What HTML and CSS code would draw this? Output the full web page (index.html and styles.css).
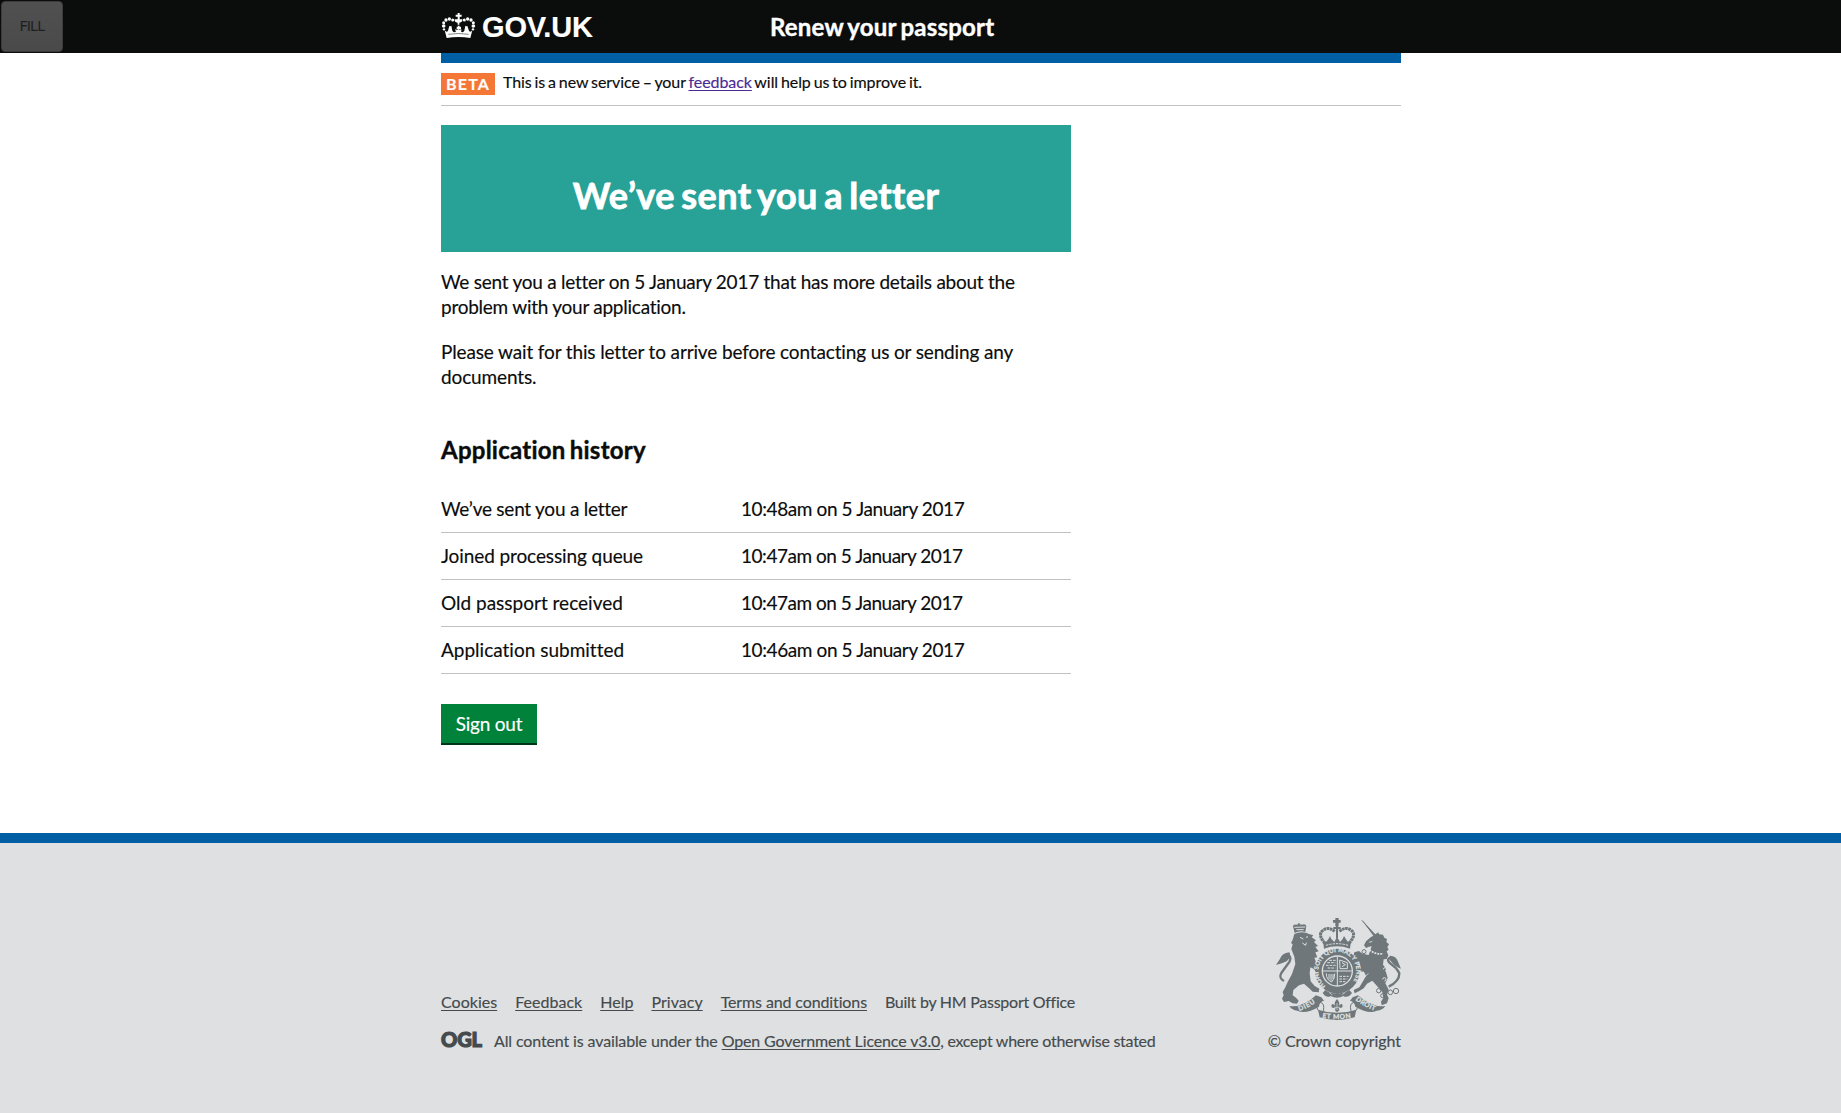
FILE: index.html
```html
<!DOCTYPE html>
<html lang="en">
<head>
<meta charset="utf-8">
<title>Renew your passport - GOV.UK</title>
<link rel="stylesheet" href="styles.css">
</head>
<body>
<button class="fill-button" type="button">FILL</button>
<header class="header">
  <div class="container header-inner">
    <a class="logo" href="#">
      <svg class="logo-crown" viewBox="33 36 105 81" aria-hidden="true">
        <g fill="#fff">
          <path d="M44 91 L50 114 Q85 108 121 114 L127 91 Q121 99 117 92 L112 78 L109 79 L106 77 L103 92 Q97 101 93 94 L95 89 Q91 86 90 91 L86 87 L80 91 Q79 86 75 89 L78 94 Q73 101 67 92 L64 77 L61 79 L58 78 L54 92 Q50 99 44 91 Z"/>
          <path d="M83 39h6v5h6v6h-6v8h8v5q-4 5-9 5v6h-5v-6q-6 0-9-5v-5h9v-8h-6v-6h6z"/>
          <path d="M80 80l3 1v-4h6v4l4-1v8h-13z"/>
          <circle cx="41" cy="78" r="5.5"/><circle cx="41" cy="68" r="4.5"/><circle cx="48" cy="60" r="5"/><circle cx="58" cy="57" r="5"/><circle cx="68" cy="60" r="4.5"/>
          <circle cx="130" cy="78" r="5.5"/><circle cx="130" cy="68" r="4.5"/><circle cx="123" cy="60" r="5"/><circle cx="113" cy="57" r="5"/><circle cx="103" cy="60" r="4.5"/>
          <circle cx="42" cy="88" r="3.5"/><circle cx="129" cy="88" r="3.5"/>
        </g>
        <path d="M55 103q30-5 61 0" fill="none" stroke="#0b0c0c" stroke-width="1.5"/>
      </svg>
      <span class="logo-text">GOV.UK</span>
    </a>
    <a class="service-name" href="#">Renew your passport</a>
  </div>
</header>
<main class="container main">
  <div class="phase-banner">
    <strong class="phase-tag">BETA</strong>
    <span class="phase-text">This is a new service – your <a href="#">feedback</a> will help us to improve it.</span>
  </div>
  <div class="column">
    <div class="confirmation"><h1>We’ve sent you a letter</h1></div>
    <p class="lead">We sent you a letter on 5 January 2017 that has more details about the problem with your application.</p>
    <p>Please wait for this letter to arrive before contacting us or sending any documents.</p>
    <h2>Application history</h2>
    <dl class="history">
      <div class="row"><dt class="tight">We’ve sent you a letter</dt><dd>10:48am on 5 January 2017</dd></div>
      <div class="row"><dt class="snug">Joined processing queue</dt><dd class="narrow">10:47am on 5 January 2017</dd></div>
      <div class="row"><dt>Old passport received</dt><dd class="narrow">10:47am on 5 January 2017</dd></div>
      <div class="row"><dt>Application submitted</dt><dd>10:46am on 5 January 2017</dd></div>
    </dl>
    <a class="button" href="#">Sign out</a>
  </div>
</main>
<footer class="footer">
  <div class="container footer-inner">
    <div class="footer-meta">
      <ul class="footer-links">
        <li><a href="#">Cookies</a></li>
        <li><a href="#">Feedback</a></li>
        <li><a href="#">Help</a></li>
        <li><a href="#">Privacy</a></li>
        <li><a class="terms" href="#">Terms and conditions</a></li>
        <li class="built">Built by HM Passport Office</li>
      </ul>
      <div class="licence">
        <svg class="ogl" viewBox="0 0 41 17" role="img" aria-label="OGL">
          <text x="0" y="16" textLength="41" lengthAdjust="spacingAndGlyphs">OGL</text>
        </svg>
        <p>All content is available under the <a href="#">Open Government Licence v3.0</a><span class="rest">, except where otherwise stated</span></p>
      </div>
    </div>
    <a class="copyright" href="#">
      <svg class="crest" viewBox="48 24 375 306" aria-hidden="true">
        <defs>
          <path id="garter" d="M197 228A57 57 0 1 1 267 228"/>
          <path id="scroll-left" d="M118 303Q146 294 172 273"/>
          <path id="scroll-mid" d="M187 323Q231 331 277 323"/>
          <path id="scroll-right" d="M286 270Q314 292 350 304"/>
        </defs>
        <g class="ink">
          <!-- lion crown -->
          <path d="M104 69L99 49Q100 42 108 44L115 43V39H119V43L126 44Q136 40 139 48L136 66Q119 61 104 69Z"/>
          <!-- lion -->
          <path d="M103 72Q119 64 138 68L147 72L160 76L155 82L168 91L162 96L174 108L166 111L176 124L166 127L172 142L163 143L169 158L181 172L185 197L176 202L162 177L151 172L149 190L152 214L164 228L178 236L176 247L158 245L149 236L132 221L117 226L100 240L98 256L108 263L116 272L111 281L98 280L86 273L72 276L66 266L71 256L68 246L76 232L83 216L96 192L106 162L103 140L94 117L98 103L93 99L98 89Z"/>
          <!-- unicorn -->
          <path d="M306 31L346 73L355 67L357 73L369 74L373 83L381 87L379 96L387 103L382 111L386 119L380 124L385 136L380 147L371 148L369 164L377 174L378 187L383 204L376 220L386 239L381 254L386 264L381 280L365 286L363 275L370 264L367 247L349 226L337 212L321 221L311 235L298 243L284 250L281 240L298 232L309 214L318 198L312 185L299 184L291 174L301 164L290 155L280 139L283 127L297 123L307 131L326 135L335 109L327 110L318 114L312 106L318 94L332 82L340 77Z"/>
        </g>
        <g class="line">
          <!-- tails -->
          <path stroke-width="7" d="M72 213Q55 204 64 189Q76 172 88 156Q95 143 86 135"/>
          <path stroke-width="7" d="M386 230Q418 215 418 190Q410 173 394 163Q376 150 391 143"/>
          <path stroke-width="3" d="M306 31L344 76"/>
        </g>
        <g class="ink">
          <path d="M88 127Q66 130 60 146L48 165Q67 160 80 154Q96 140 88 127Z"/>
          <path d="M390 137Q409 137 414 155L423 176Q404 169 394 155Q384 146 390 137Z"/>
          <!-- crown -->
          <path d="M226 24H236V30H242V38H236V49H226V38H219V30H226Z"/>
        </g>
        <g class="line">
          <path stroke-width="9" stroke-dasharray="8 1.5" d="M195 100Q172 74 188 62Q204 48 224 64M267 100Q290 74 275 62Q258 48 238 64"/>
          <path stroke-width="6" d="M231 48V84M220 54H242"/>
        </g>
        <g class="ink">
          <path d="M189 91L198 96L206 86L210 78L214 87L223 96L231 80L240 96L248 87L252 78L257 86L264 96L273 91L270 116Q231 102 192 116Z"/>
        </g>
        <path class="cut" stroke-width="3" stroke-dasharray="7 3" d="M198 106Q231 96 264 106"/>
        <!-- garter and shield -->
        <circle class="ink" cx="232" cy="183" r="67"/>
        <circle class="paper" cx="232" cy="183" r="47"/>
        <circle class="ink" cx="232" cy="183" r="43"/>
        <path class="cut" stroke-width="3" d="M232 140V226M189 183H275"/>
        <path class="cut" stroke-width="3" stroke-dasharray="8 3" d="M202 158H226M198 166H227M203 174H226M208 151H227M238 199H266M238 207H262M238 215H256"/>
        <path class="cut" stroke-width="3" d="M239 150L262 158V176H240ZM246 158L256 164L246 170M199 190Q199 210 215 216Q225 205 224 191M207 192V208M213 192V212M219 192V207"/>
        <text class="motto"><textPath href="#garter" textLength="262">HONI SOIT QUI MAL Y PENSE</textPath></text>
        <!-- lion and unicorn details -->
        <path class="cut" stroke-width="3" d="M120 82L130 87M138 82L144 80M127 99L137 106L139 98M103 52L136 51M109 59H131"/>
        <path class="cut" stroke-width="5" stroke-dasharray="6 3" d="M328 119Q346 135 369 131"/>
        <path class="cut" stroke-width="2.5" d="M327 97L337 94M310 205L325 190M168 202L183 211M162 180L169 190"/>
        <g class="line">
          <circle cx="356" cy="242" r="6.5" stroke-width="3"/><circle cx="368" cy="257" r="6" stroke-width="3"/><circle cx="391" cy="247" r="7" stroke-width="3"/><circle cx="408" cy="243" r="8" stroke-width="3"/><circle cx="312" cy="125" r="6" stroke-width="3"/><circle cx="302" cy="137" r="5" stroke-width="3"/>
        </g>
        <path class="cut" stroke-width="3" d="M370 178A5 5 0 1 1 375 183M368 208A5 5 0 1 1 373 213"/>
        <!-- scroll -->
        <g class="ink">
          <path d="M196 240Q213 254 231 248Q249 254 268 240L276 249Q263 266 250 258Q231 268 212 258Q200 266 188 249Z"/>
          <path d="M88 288Q128 294 168 256L184 262L192 272Q178 275 177 290Q137 314 112 302Q96 301 88 288Z"/>
          <path d="M376 288Q336 294 294 256L278 262L270 272Q284 275 286 290Q327 314 350 302Q368 301 376 288Z"/>
          <path d="M174 299Q231 318 289 299L284 322Q231 338 179 322Z"/>
        </g>
        <path class="line" stroke-width="3" d="M174 301Q163 280 181 277Q195 280 190 303M289 301Q300 280 282 277Q267 280 273 303"/>
        <path class="ink" d="M231 267Q242 279 236 287Q248 276 248 288Q246 297 237 293H236L238 301L231 307L225 301L227 293Q215 297 214 288Q215 276 226 287Q220 279 231 267Z"/>
        <path class="cut" stroke-width="2" d="M231 279V300M222 292H241M207 247L217 255M246 254L256 247"/>
        <g class="scroll-text">
          <text><textPath href="#scroll-left" textLength="54">DIEU</textPath></text>
          <text><textPath href="#scroll-mid" textLength="86">ET MON</textPath></text>
          <text><textPath href="#scroll-right" textLength="66">DROIT</textPath></text>
        </g>
      </svg>
      <span>© Crown copyright</span>
    </a>
  </div>
</footer>
</body>
</html>
```
FILE: styles.css
```css
* { box-sizing: border-box; }

body {
  margin: 0;
  background: #fff;
  color: #0b0c0c;
  font: 19px/25px Lato, "Liberation Sans", sans-serif;
  font-variant-ligatures: none;
  -webkit-text-stroke: 0.15px currentColor;
}

h1, h2, p, ul, dl, dd { margin: 0; padding: 0; }

.container { width: 960px; margin: 0 auto; position: relative; left: 0.5px; }

/* overlay button, floats over the header */
.fill-button {
  position: absolute;
  z-index: 2;
  top: 1px;
  left: 1px;
  width: 62px;
  height: 51px;
  padding: 0 0 3px;
  border: 1px solid #3c3c3c;
  border-radius: 4px;
  background: linear-gradient(#505050, #4a4a4a);
  color: #1c1e22;
  font: 15px/20px "Open Sans", sans-serif;
  letter-spacing: -0.7px;
}

.header { height: 53px; background: #0b0c0c; }
.header-inner { display: flex; }
.header a { color: #fff; text-decoration: none; }

.logo { display: flex; width: 329px; height: 53px; padding-top: 12px; }
.logo-crown { width: 35px; height: 27px; }
.logo-text {
  margin-left: 6px;
  font: 700 29px/30px "Liberation Sans", sans-serif;
  letter-spacing: -0.15px;
}
.service-name {
  padding-top: 12px;
  font-size: 24px;
  font-weight: 700;
  line-height: 30px;
  letter-spacing: 0.2px;
  word-spacing: -1.6px;
  -webkit-text-stroke-width: 0.4px;
}

.main { height: 780px; border-top: 10px solid #005ea5; }

.phase-banner {
  display: flex;
  height: 43px;
  padding-top: 10px;
  border-bottom: 1px solid #bfc1c3;
}
.phase-tag {
  width: 54px;
  height: 22px;
  padding-left: 5px;
  background: #f47738;
  color: #fff;
  font-size: 16px;
  line-height: 22px;
  letter-spacing: 1.2px;
}
.phase-text {
  margin-left: 8px;
  font-size: 16px;
  line-height: 18px;
  letter-spacing: -0.07px;
  word-spacing: -1.15px;
}
a { text-decoration-thickness: 1px; text-underline-offset: 2px; text-decoration-skip-ink: none; }
.phase-text a { color: #4c2c92; }

.column { width: 630px; }
.confirmation {
  height: 127px;
  margin-top: 19px;
  padding-top: 50px;
  background: #28a197;
  color: #fff;
  text-align: center;
}
h1 {
  font-size: 36px;
  line-height: 40px;
  letter-spacing: 0.45px;
  word-spacing: -2.8px;
  -webkit-text-stroke-width: 0.8px;
}

.column p { margin-top: 20px; letter-spacing: -0.14px; }
.column .lead { margin-top: 17px; letter-spacing: -0.25px; }

h2 {
  margin-top: 46px;
  font-size: 24px;
  line-height: 30px;
  letter-spacing: 0.25px;
  word-spacing: -2px;
  -webkit-text-stroke-width: 0.4px;
}

.history { margin-top: 21px; }
.row {
  display: flex;
  height: 47px;
  padding-top: 10px;
  border-bottom: 1px solid #bfc1c3;
}
.row dt { width: 300px; }
.row dd { letter-spacing: -0.4px; }
.row .tight { letter-spacing: -0.24px; }
.row .snug { letter-spacing: -0.1px; }
.row .narrow { letter-spacing: -0.47px; }

.button {
  display: inline-block;
  width: 96px;
  height: 39px;
  margin-top: 30px;
  padding-top: 7px;
  background: #00823b;
  box-shadow: 0 2px 0 #003618;
  color: #fff;
  letter-spacing: -0.2px;
  text-align: center;
  text-decoration: none;
}

.footer {
  height: 280px;
  border-top: 10px solid #005ea5;
  background: #dee0e2;
  color: #454a4c;
  font-size: 16px;
  line-height: 20px;
}
.footer a { color: #454a4c; }
.footer-inner { display: flex; justify-content: space-between; }
.footer-meta { padding-top: 149px; }
.footer-links { display: flex; gap: 18px; list-style: none; }
.footer-links a { letter-spacing: 0.02px; }
.footer-links .terms { letter-spacing: -0.12px; }
.footer-links .built { letter-spacing: -0.26px; }
.licence { display: flex; padding-top: 19px; letter-spacing: -0.13px; }
.licence a { letter-spacing: -0.13px; }
.licence .rest { letter-spacing: -0.26px; }
.ogl { width: 41px; height: 17px; margin-right: 12px; overflow: visible; }
.ogl text { fill: #454a4c; stroke: #454a4c; stroke-width: 1.2px; font: 900 20.5px Lato, sans-serif; }

.copyright {
  display: flex;
  flex-direction: column;
  align-items: flex-end;
  padding-top: 75px;
  letter-spacing: -0.05px;
}
.footer .copyright { text-decoration: none; }
.crest { width: 125px; height: 102px; margin-bottom: 11px; }
.ink { fill: #6f777b; }
.paper { fill: #dee0e2; }
.line { fill: none; stroke: #6f777b; }
.cut { fill: none; stroke: #dee0e2; }
.motto, .scroll-text { fill: #dee0e2; stroke: #dee0e2; stroke-width: 0.8px; font: 700 20px Lato, sans-serif; }
.motto { font-size: 18px; }
```
